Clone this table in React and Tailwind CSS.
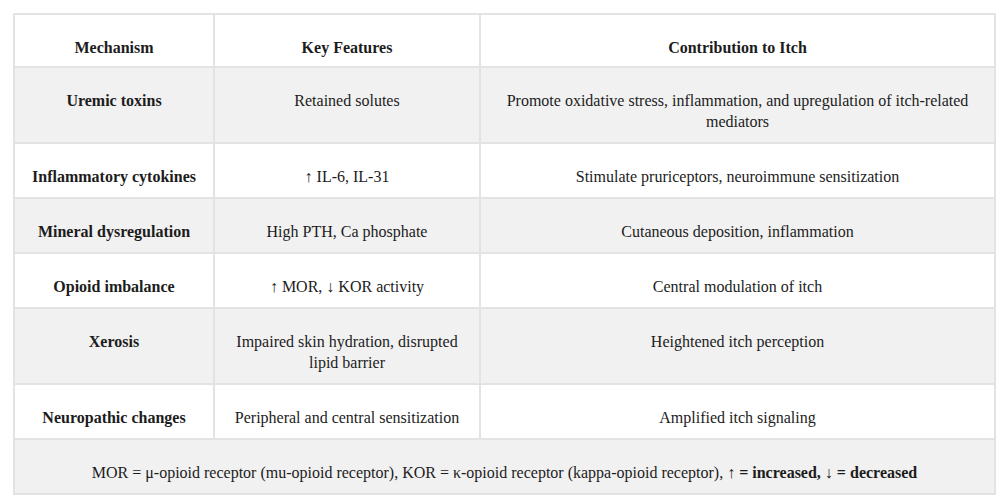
const rows = [
    ["Uremic toxins", "Retained solutes", "Promote oxidative stress, inflammation, and upregulation of itch-related mediators"],
    ["Inflammatory cytokines", "↑ IL-6, IL-31", "Stimulate pruriceptors, neuroimmune sensitization"],
    ["Mineral dysregulation", "High PTH, Ca phosphate", "Cutaneous deposition, inflammation"],
    ["Opioid imbalance", "↑ MOR, ↓ KOR activity", "Central modulation of itch"],
    ["Xerosis", "Impaired skin hydration, disrupted lipid barrier", "Heightened itch perception"],
    ["Neuropathic changes", "Peripheral and central sensitization", "Amplified itch signaling"],
];

export default function App() {
    const base = "border-2 border-[#e3e3e3] text-center align-top px-3";
    const cell = `${base} pt-[22px] pb-[10px]`;
    const head = `${base} pt-[22px] pb-[8px] font-bold`;

    return (
        <div className="min-h-screen bg-white pt-[13px] pl-[13px] pr-[11px]">
            <table
                className="w-[983px] table-fixed border-collapse text-[16px] leading-[21px] text-[#1c1c1c]"
                style={{ fontFamily: '"Liberation Serif", "DejaVu Serif", serif' }}
            >
                <colgroup>
                    <col className="w-[200px]" />
                    <col className="w-[266px]" />
                    <col />
                </colgroup>
                <thead>
                    <tr className="bg-white">
                        <th className={head}>Mechanism</th>
                        <th className={head}>Key Features</th>
                        <th className={head}>Contribution to Itch</th>
                    </tr>
                </thead>
                <tbody>
                    {rows.map((r, i) => (
                        <tr key={r[0]} className={i % 2 === 0 ? "bg-[#f1f1f1]" : "bg-white"}>
                            <td className={`${cell} font-bold`}>{r[0]}</td>
                            <td className={cell}>{r[1]}</td>
                            <td className={`${cell} pb-[9px]`}>{r[2]}</td>
                        </tr>
                    ))}
                    <tr className="bg-[#f1f1f1]">
                        <td colSpan={3} className={cell}>
                            MOR = μ-opioid receptor (mu-opioid receptor), KOR = κ-opioid receptor (kappa-opioid receptor),{" "}
                            <span className="font-bold">↑ = increased, ↓ = decreased</span>
                        </td>
                    </tr>
                </tbody>
            </table>
        </div>
    );
}
